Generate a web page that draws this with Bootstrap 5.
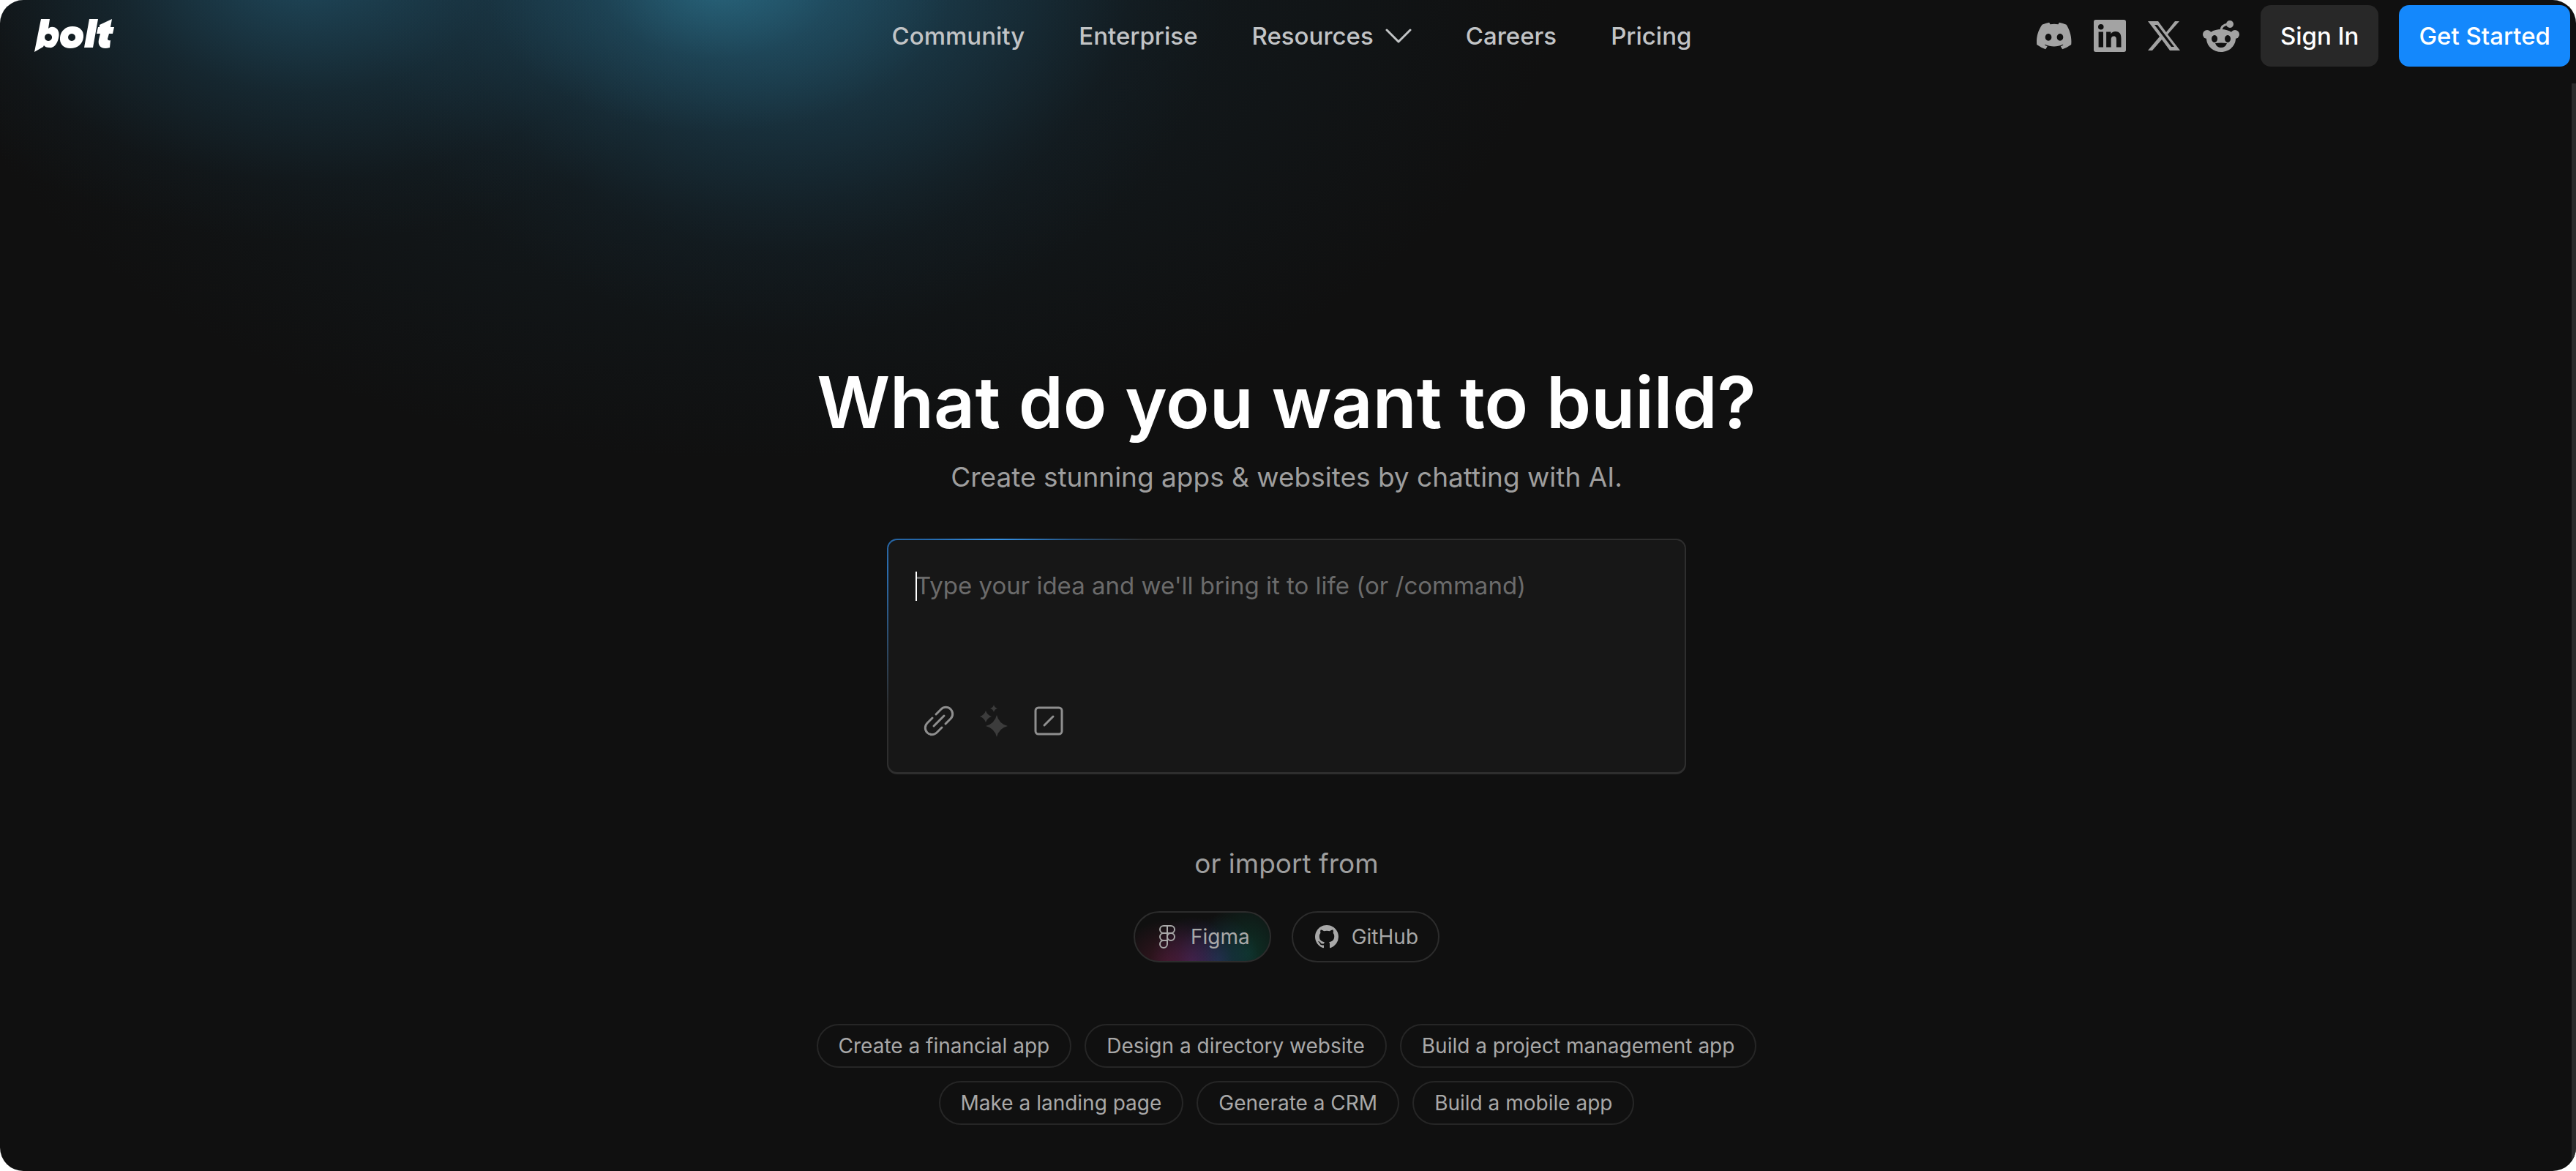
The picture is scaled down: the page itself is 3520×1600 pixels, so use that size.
<!DOCTYPE html>
<html lang="en">
<head>
<meta charset="utf-8">
<meta name="viewport" content="width=device-width, initial-scale=1">
<title>Bolt</title>
<link href="https://cdn.jsdelivr.net/npm/bootstrap@5.3.0/dist/css/bootstrap.min.css" rel="stylesheet">
<style>
  html { background: #fff; }
  body { background: transparent; color: #9e9e9e; font-family: Inter, "Liberation Sans", sans-serif; font-size: 33px; line-height: 48px; }
  .shell {
    min-height: 100vh; border-radius: 32px; overflow: hidden; position: relative;
    background:
      radial-gradient(ellipse 320px 200px at 980px -20px, rgba(50,130,158,.5), rgba(42,110,138,.2) 50%, transparent),
      radial-gradient(ellipse 600px 520px at 1080px -60px, rgba(36,92,118,.6), rgba(34,84,110,.3) 45%, rgba(30,70,95,.08) 78%, transparent),
      radial-gradient(ellipse 580px 370px at 420px -40px, rgba(38,98,126,.65), rgba(32,80,104,.3) 45%, rgba(28,66,88,.08) 78%, transparent),
      radial-gradient(ellipse 1120px 690px at 1020px -60px, rgba(30,78,100,.5), rgba(26,62,80,.18) 50%, transparent),
      #101010;
  }
  .topbar { padding: 7px 8px; min-height: 98px; }
  .side { flex: 1 1 0; }
  .logo { width: 110px; margin-left: 38px; }
  .logo svg { width: 110px; height: 46px; display: block; }
  .menu { gap: 74px; padding-left: 10px; }
  .menu a, .menu button { color: #c2c4c6; font-weight: 500; text-decoration: none; background: none; border: 0; padding: 0; line-height: 48px; }
  .menu button { display: flex; align-items: center; gap: 16px; }
  .social { gap: 30px; color: #a3a3a3; margin-right: 28px; }
  .social a { color: inherit; display: block; }
  .social svg { display: block; }
  .cta { font-size: 33px; font-weight: 500; height: 84px; padding: 0 27px; border: 0; border-radius: 14px; color: #fff; line-height: 48px; }
  .cta-dark { background: #282828; margin-right: 28px; }
  .cta-blue { background: #1488fc; }
  .track { position: absolute; right: 0; top: 114px; bottom: 0; width: 6px; background: #2b2b2b; }
  .hero { padding: 384px 4px 0 0; }
  .hero h1 { font-size: 98px; font-weight: 600; line-height: 136px; color: #fff; margin: 0; }
  .tagline { font-size: 37px; line-height: 56px; margin: 6px 0 0; }
  .prompt { width: 1092px; max-width: 94%; margin-top: 56px; border-radius: 14px; padding: 2px 2px 3px;
    background:
      radial-gradient(ellipse 200px 30px at 150px 0, #3794e8, rgba(30,110,190,.6) 50%, transparent),
      radial-gradient(ellipse 240px 190px at 0 40px, #2a6db0, transparent),
      #2e2e2e; }
  .prompt-in { background: #171717; border-radius: 12px; padding: 38px 37px 46px; }
  .prompt textarea { display: block; width: 100%; height: 176px; resize: none; background: none; border: 0; padding: 0; color: #fff; outline: 0; line-height: 48px; caret-color: transparent; }
  .prompt textarea::placeholder { color: #6b6b6b; opacity: 1; }
  .caret { position: absolute; left: 37px; top: 43px; width: 2px; height: 40px; background: #fff; }
  .tools { gap: 27px; padding: 9px 8px 0; }
  .tools button { background: none; border: 0; padding: 0; color: #8f8f8f; display: block; }
  .tools svg { display: block; width: 48px; height: 48px; }
  .tools button:disabled { color: #3c3c3c; }
  .or { font-size: 37px; line-height: 56px; margin: 94px 0 0; }
  .pill { font-size: 28px; line-height: 40px; border: 2px solid #2c2c2c; border-radius: 36px; background: none; color: #a8a8a8; }
  .import { gap: 28px; margin-top: 37px; }
  .import .pill { height: 70px; padding: 0 27px 0 30px; display: flex; align-items: center; gap: 18px; }
  .import .figma { background:
      radial-gradient(ellipse 66px 60px at 24% 105%, rgba(120,30,60,.42), transparent),
      radial-gradient(ellipse 56px 64px at 42% 105%, rgba(100,50,150,.4), transparent),
      radial-gradient(ellipse 56px 62px at 62% 100%, rgba(40,80,140,.35), transparent),
      radial-gradient(ellipse 62px 80px at 84% 85%, rgba(10,90,66,.45), transparent); }
  .ideas { margin-top: 84px; max-width: 1310px; gap: 18px; }
  .ideas .pill { height: 60px; padding: 0 28px; border-color: #262626; }
</style>
</head>
<body>
<div class="shell d-flex flex-column">
  <header class="topbar d-flex align-items-center">
    <div class="side">
      <a class="logo d-block" href="#" aria-label="bolt">
        <svg viewBox="0 0 110 46" fill="#fff"><path fill-rule="evenodd" d="M10 0H22L20 13Q23 10 27 11C33 12 36 18 34 26C32 35 27 40 21 39Q16 39 14 36L13 38L1 45Z M20 20a5 5 0 1 0 .1 0z"/><path fill-rule="evenodd" d="M53 10C63 10 69 16 68 25C67 34 60 40 50 40C41 40 35 34 36 25C37 16 44 10 53 10z M52 20a5 5 0 1 0 .1 0z"/><path d="M76 0H88L81 39H69Z M90 8L107 0L105 11H110L108 20H103L101 27Q101 30 105 29L104 39C94 42 87 38 89 28L91 20H86L88 11H90Z"/></svg>
      </a>
    </div>
    <nav class="menu d-flex align-items-center" aria-label="Main">
      <a href="#">Community</a>
      <a href="#">Enterprise</a>
      <button type="button">Resources
        <svg width="36" height="20" viewBox="0 0 36 20" fill="none" stroke="currentColor" stroke-width="3" stroke-linecap="round" stroke-linejoin="round"><path d="M2 2l16 16L34 2"/></svg>
      </button>
      <a href="#">Careers</a>
      <a href="#">Pricing</a>
    </nav>
    <div class="side d-flex align-items-center justify-content-end">
      <div class="social d-flex align-items-center">
        <a href="#" aria-label="Discord"><svg width="48" height="48" viewBox="0 0 24 24" fill="currentColor"><path d="M20.317 4.37a19.8 19.8 0 0 0-4.885-1.515c-.25.42-.48.86-.66 1.27a18.3 18.3 0 0 0-5.54 0c-.18-.41-.41-.86-.66-1.27A19.7 19.7 0 0 0 3.677 4.37C.533 9.046-.32 13.58.1 18.058a20 20 0 0 0 5.993 3.03c.46-.63.87-1.3 1.226-1.994a13 13 0 0 1-1.872-.892l.372-.292c3.93 1.8 8.18 1.8 12.06 0l.373.292c-.6.35-1.22.64-1.873.892.36.7.77 1.36 1.225 1.993a19.9 19.9 0 0 0 6.002-3.03c.5-5.177-.838-9.674-3.289-13.687zM8.02 15.33c-1.183 0-2.157-1.085-2.157-2.419s.955-2.419 2.157-2.419c1.21 0 2.176 1.095 2.157 2.42 0 1.333-.956 2.418-2.157 2.418zm7.975 0c-1.183 0-2.157-1.085-2.157-2.419s.955-2.419 2.157-2.419c1.21 0 2.176 1.095 2.157 2.42 0 1.333-.946 2.418-2.157 2.418z"/></svg></a>
        <a href="#" aria-label="LinkedIn"><svg width="44" height="44" viewBox="0 0 24 24" fill="currentColor"><path fill-rule="evenodd" d="M1.5 0h21A1.5 1.5 0 0 1 24 1.500v21a1.500 1.500 0 0 1-1.500 1.500h-21A1.500 1.500 0 0 1 0 22.500v-21A1.500 1.500 0 0 1 1.500 0zM3.600 9v11.400h3.500V9zM5.340 3.300a2.060 2.060 0 1 0 0 4.130 2.060 2.060 0 0 0 0-4.130zM9.350 9v11.450h3.560v-5.600c0-1.500.6-2.600 2.100-2.600 1.600 0 1.880 1.300 1.880 2.700v5.500h3.560v-6.300c0-3.100-.8-5.400-4.270-5.400-1.700 0-2.800.9-3.370 1.810h-.05V9z"/></svg></a>
        <a href="#" aria-label="X"><svg width="44" height="40" viewBox="0 0 44 40" fill="currentColor"><path fill-rule="evenodd" d="M0 0H14L25 15L37 0H43L27 18L44 40H30L19 25L6 40H0L16 21zM9 5L32 35H36L13 5z"/></svg></a>
        <a href="#" aria-label="Reddit"><svg width="52" height="46" viewBox="0 0 52 46" fill="currentColor"><path fill-rule="evenodd" d="M26 14C36 14 46 19 46 28C45 38 36 45 26 45S7 38 6 28C6 19 16 14 26 14zM17 22a4 5 0 1 0 .1 0zM35 22a4 5 0 1 0 .1 0zM18 33Q26 32 34 33Q32 39 26 39T18 33z"/><circle cx="7" cy="21" r="6"/><circle cx="45" cy="21" r="6"/><circle cx="38" cy="7" r="5"/><path d="M26 16Q26 8 36 7" fill="none" stroke="currentColor" stroke-width="3"/></svg></a>
      </div>
      <button type="button" class="cta cta-dark">Sign In</button>
      <button type="button" class="cta cta-blue">Get Started</button>
    </div>
  </header>
  <div class="track"></div>
  <main class="hero d-flex flex-column align-items-center text-center">
    <h1>What do you want to build?</h1>
    <p class="tagline">Create stunning apps &amp; websites by chatting with AI.</p>
    <form class="prompt">
      <div class="prompt-in position-relative">
        <textarea aria-label="Your idea" placeholder="Type your idea and we'll bring it to life (or /command)"></textarea>
        <span class="caret"></span>
        <div class="tools d-flex align-items-center">
          <button type="button" aria-label="Attach link"><svg viewBox="0 0 48 48" fill="none" stroke="currentColor" stroke-width="3" stroke-linecap="round"><path d="M20 15l7-7a9 9 0 0 1 13 13l-7 7"/><path d="M28 33l-7 7a9 9 0 0 1-13-13l7-7"/><path d="M17 31L31 17"/></svg></button>
          <button type="button" aria-label="Enhance prompt" disabled><svg viewBox="0 0 48 48" fill="currentColor"><path d="M28 16Q31 28 43 31Q31 34 28 46Q25 34 13 31Q25 28 28 16zM13 10Q15 16 21 18Q15 20 13 26Q11 20 5 18Q11 16 13 10zM24 2Q25 6 29 7Q25 8 24 12Q23 8 19 7Q23 6 24 2z"/></svg></button>
          <button type="button" aria-label="Commands"><svg viewBox="0 0 48 48" fill="none" stroke="currentColor" stroke-width="3" stroke-linecap="round"><rect x="6" y="6" width="36" height="36" rx="4"/><path d="M18 30L30 18"/></svg></button>
        </div>
      </div>
    </form>
    <p class="or">or import from</p>
    <div class="import d-flex justify-content-center">
      <button type="button" class="pill figma"><svg width="28" height="34" viewBox="2 0 28 34" fill="none" stroke="currentColor" stroke-width="2"><path d="M16 2h-5a5 5 0 0 0 0 10h5zM16 2h5a5 5 0 0 1 0 10h-5zM16 12h-5a5 5 0 0 0 0 10h5zM16 22h-5a5 5 0 1 0 5 5z"/><circle cx="21" cy="17" r="5"/></svg>Figma</button>
      <button type="button" class="pill"><svg width="32" height="32" viewBox="0 0 16 16" fill="currentColor"><path d="M8 0C3.580 0 0 3.580 0 8c0 3.540 2.290 6.530 5.470 7.590.4.070.55-.17.55-.38 0-.19-.01-.82-.01-1.490-2.010.37-2.530-.49-2.690-.94-.09-.23-.48-.94-.82-1.130-.28-.15-.68-.52-.01-.53.63-.01 1.080.58 1.230.82.72 1.210 1.870.87 2.330.66.07-.52.28-.87.51-1.070-1.780-.2-3.640-.89-3.640-3.950 0-.87.31-1.590.82-2.150-.08-.2-.36-1.020.08-2.120 0 0 .67-.21 2.200.82.64-.18 1.320-.27 2-.27s1.360.09 2 .27c1.530-1.040 2.200-.82 2.200-.82.44 1.100.16 1.920.08 2.120.51.56.82 1.270.82 2.150 0 3.070-1.870 3.750-3.650 3.950.29.25.54.73.54 1.480 0 1.070-.01 1.930-.01 2.200 0 .21.15.46.55.38A8.010 8.010 0 0 0 16 8c0-4.420-3.580-8-8-8z"/></svg>GitHub</button>
    </div>
    <div class="ideas d-flex flex-wrap justify-content-center">
      <button type="button" class="pill">Create a financial app</button>
      <button type="button" class="pill">Design a directory website</button>
      <button type="button" class="pill">Build a project management app</button>
      <button type="button" class="pill">Make a landing page</button>
      <button type="button" class="pill">Generate a CRM</button>
      <button type="button" class="pill">Build a mobile app</button>
    </div>
  </main>
</div>
<script src="https://cdn.jsdelivr.net/npm/bootstrap@5.3.0/dist/js/bootstrap.bundle.min.js"></script>
</body>
</html>
